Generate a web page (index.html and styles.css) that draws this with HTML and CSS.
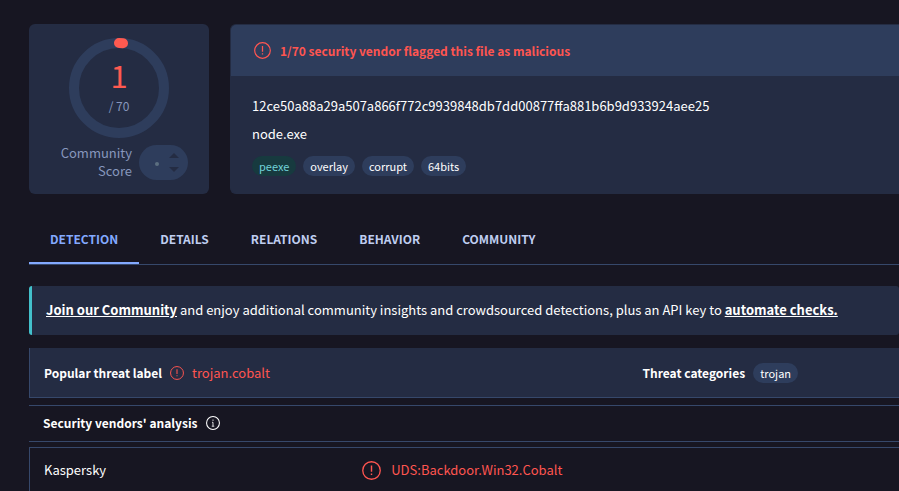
FILE: index.html
```html
<!DOCTYPE html>
<html lang="en">
<head>
  <meta charset="UTF-8">
  <meta name="viewport" content="width=device-width, initial-scale=1.0">
  <title>node.exe - File report</title>
  <link rel="stylesheet" href="styles.css">
</head>
<body>
  <!-- Shared icons -->
  <svg class="sprite" aria-hidden="true">
    <symbol id="icon-alert" viewBox="0 0 20 20">
      <circle cx="10" cy="10" r="9.2" fill="none" stroke="currentColor" stroke-width="1.4"/>
      <path d="M10 4.8v6.6M10 13.2v1.6" fill="none" stroke="currentColor" stroke-width="1.5"/>
    </symbol>
    <symbol id="icon-info" viewBox="0 0 20 20">
      <circle cx="10" cy="10" r="9.2" fill="none" stroke="currentColor" stroke-width="1.5"/>
      <path d="M10 5v2M8.6 9H10v5.4M8.2 14.6h3.6" fill="none" stroke="currentColor" stroke-width="1.2"/>
    </symbol>
  </svg>

  <main>
    <div class="summary">
      <!-- Detection score -->
      <section class="card score-card">
        <div class="score">
          <svg class="ring" viewBox="0 0 100 100" aria-hidden="true">
            <circle class="ring-track" cx="50" cy="50" r="45"/>
            <path class="ring-value" d="M50 5 A45 45 0 0 1 54 5.2"/>
          </svg>
          <span class="score-count">1</span>
          <span class="score-total">/ 70</span>
        </div>
        <div class="community">
          <span class="community-label">Community Score</span>
          <div class="votes">
            <span class="vote-dot"></span>
            <div class="vote-buttons">
              <button type="button" aria-label="Vote up"><svg viewBox="0 0 10 5"><path d="M0 5 5 0l5 5z"/></svg></button>
              <button type="button" aria-label="Vote down"><svg viewBox="0 0 10 5"><path d="M0 0l5 5 5-5z"/></svg></button>
            </div>
          </div>
        </div>
      </section>

      <!-- File info -->
      <section class="card file-card">
        <div class="verdict">
          <svg class="icon-md"><use href="#icon-alert"/></svg>
          <strong>1/70 security vendor flagged this file as malicious</strong>
        </div>
        <div class="file-info">
          <p>12ce50a88a29a507a866f772c9939848db7dd00877ffa881b6b9d933924aee25</p>
          <p>node.exe</p>
          <div class="tags">
            <a href="#" class="tag tag-green">peexe</a>
            <a href="#" class="tag">overlay</a>
            <a href="#" class="tag">corrupt</a>
            <a href="#" class="tag">64bits</a>
          </div>
        </div>
      </section>
    </div>

    <nav class="tabs">
      <a href="#" class="tab active">DETECTION</a>
      <a href="#" class="tab">DETAILS</a>
      <a href="#" class="tab">RELATIONS</a>
      <a href="#" class="tab">BEHAVIOR</a>
      <a href="#" class="tab">COMMUNITY</a>
    </nav>

    <p class="banner"><a href="#">Join our Community</a> and enjoy additional community insights and crowdsourced detections, plus an API key to <a href="#">automate checks.</a></p>

    <section class="threat">
      <div class="threat-label">
        <strong>Popular threat label</strong>
        <svg class="icon-sm red"><use href="#icon-alert"/></svg>
        <span class="red">trojan.cobalt</span>
      </div>
      <div class="threat-categories">
        <strong>Threat categories</strong>
        <a href="#" class="tag">trojan</a>
      </div>
    </section>

    <h2 class="analysis-title">Security vendors' analysis <svg class="icon-sm"><use href="#icon-info"/></svg></h2>

    <table class="vendors">
      <tbody>
        <tr>
          <th scope="row">Kaspersky</th>
          <td>
            <div class="result">
              <svg class="icon-lg"><use href="#icon-alert"/></svg>
              <span>UDS:Backdoor.Win32.Cobalt</span>
            </div>
          </td>
        </tr>
      </tbody>
    </table>
  </main>
</body>
</html>
```
FILE: styles.css
```css
* {
  box-sizing: border-box;
}
body {
  margin: 0;
  background-color: #171622;
  color: #ffffff;
  font-family: "Noto Sans CJK SC", "Noto Sans CJK JP", sans-serif;
  font-size: 13px;
  line-height: 20px;
}
main {
  padding: 24px 0 0 29px;
}
a {
  color: inherit;
  text-decoration: none;
}
p {
  margin: 0;
}
strong {
  font-size: 12px;
}
svg {
  display: block;
  flex: none;
}
.sprite {
  position: absolute;
  width: 0;
  height: 0;
}
.icon-sm {
  width: 14px;
  height: 14px;
}
.icon-md {
  width: 17px;
  height: 17px;
}
.icon-lg {
  width: 19px;
  height: 19px;
}
.red {
  color: #ff5550;
}

/* Summary cards */
.summary {
  display: flex;
  gap: 21px;
}
.card {
  background-color: #242c43;
  border-radius: 6px;
}
.score-card {
  flex: none;
  width: 180px;
  min-height: 170px;
  padding-top: 14px;
}
.score {
  display: grid;
  grid-template-rows: 58px 42px;
  justify-items: center;
  width: 100px;
  margin: 0 auto;
}
.ring {
  grid-area: 1 / 1 / 3 / 2;
  width: 100px;
  height: 100px;
}
.ring-track {
  fill: none;
  stroke: #2e3d5c;
  stroke-width: 10;
}
.ring-value {
  fill: none;
  stroke: #ff5a50;
  stroke-width: 10;
  stroke-linecap: round;
}
.score-count {
  grid-area: 1 / 1;
  align-self: end;
  color: #ff5a50;
  font-size: 31px;
  line-height: 42px;
}
.score-total {
  grid-area: 2 / 1;
  color: #8797bd;
  font-size: 12px;
}
.community {
  display: flex;
  justify-content: flex-end;
  align-items: center;
  gap: 7px;
  padding: 6px 21px 0 0;
}
.community-label {
  width: 80px;
  color: #8797bd;
  line-height: 18px;
  text-align: right;
}
.votes {
  display: flex;
  align-items: center;
  justify-content: space-between;
  width: 49px;
  height: 35px;
  padding: 0 9px 0 16px;
  border-radius: 18px;
  background-color: #2e3d5c;
}
.vote-dot {
  width: 4px;
  height: 4px;
  margin-top: 3px;
  border-radius: 50%;
  background-color: #5c6f80;
}
.vote-buttons {
  display: flex;
  flex-direction: column;
  gap: 9px;
}
.vote-buttons button {
  padding: 0;
  border: none;
  background: none;
  cursor: pointer;
}
.vote-buttons svg {
  width: 10px;
  height: 5px;
  fill: #242c43;
}
.file-card {
  flex: 1;
  min-width: 0;
  border: 1px solid #242c43;
  border-right: none;
  border-radius: 6px 0 0 6px;
  overflow: hidden;
}
.verdict {
  display: flex;
  align-items: center;
  gap: 9px;
  height: 51px;
  padding: 0 23px;
  background-color: #2e3d5c;
  color: #ff5550;
}
.file-info {
  padding: 20px 21px 17px;
}
.file-info p {
  margin-bottom: 8px;
}
.tags {
  display: flex;
  gap: 7px;
  padding-top: 4px;
}
.tag {
  padding: 0 7px;
  border-radius: 10px;
  background-color: #2e3d5c;
  font-size: 11px;
  line-height: 20px;
}
.tag-green {
  background-color: #173a3f;
  color: #72d3d9;
}

/* Tabs */
.tabs {
  display: flex;
  margin-top: 20px;
  border-bottom: 1px solid #36486b;
}
.tab {
  padding: 15px 21px 13px;
  border-bottom: 2px solid transparent;
  color: #bfcdf0;
  font-size: 12px;
  font-weight: bold;
}
.tab.active {
  border-color: #83a9ff;
  color: #83a9ff;
}

.banner {
  margin-top: 21px;
  padding: 14px 14px 15px;
  border-left: 3px solid #43c0cb;
  border-radius: 3px;
  background-color: #242c43;
}
.banner a {
  font-weight: bold;
  text-decoration: underline;
}

/* Threat label row */
.threat {
  display: flex;
  align-items: center;
  min-height: 50px;
  margin-top: 13px;
  padding-left: 14px;
  border-left: 1px solid #36486b;
  border-bottom: 1px solid #36486b;
  background-color: #242c43;
}
.threat-label,
.threat-categories {
  display: flex;
  align-items: center;
  gap: 8px;
}
.threat-label {
  width: 70%;
}

/* Vendors */
.analysis-title {
  display: flex;
  align-items: center;
  gap: 9px;
  margin: 7px 0 5px;
  padding: 7px 14px 8px;
  border-top: 1px solid #36486b;
  border-bottom: 1px solid #36486b;
  font-size: 12px;
  line-height: 20px;
}
.vendors {
  width: 100%;
  border-collapse: separate;
  border-spacing: 0;
  border-top: 1px solid #36486b;
  border-left: 1px solid #36486b;
  table-layout: fixed;
}
.vendors th,
.vendors td {
  padding: 12px 0 11px 2px;
  font-weight: normal;
  text-align: left;
}
.vendors th {
  width: 38%;
  padding-left: 14px;
}
.result {
  display: flex;
  align-items: center;
  gap: 10px;
  color: #ff5550;
}
```
